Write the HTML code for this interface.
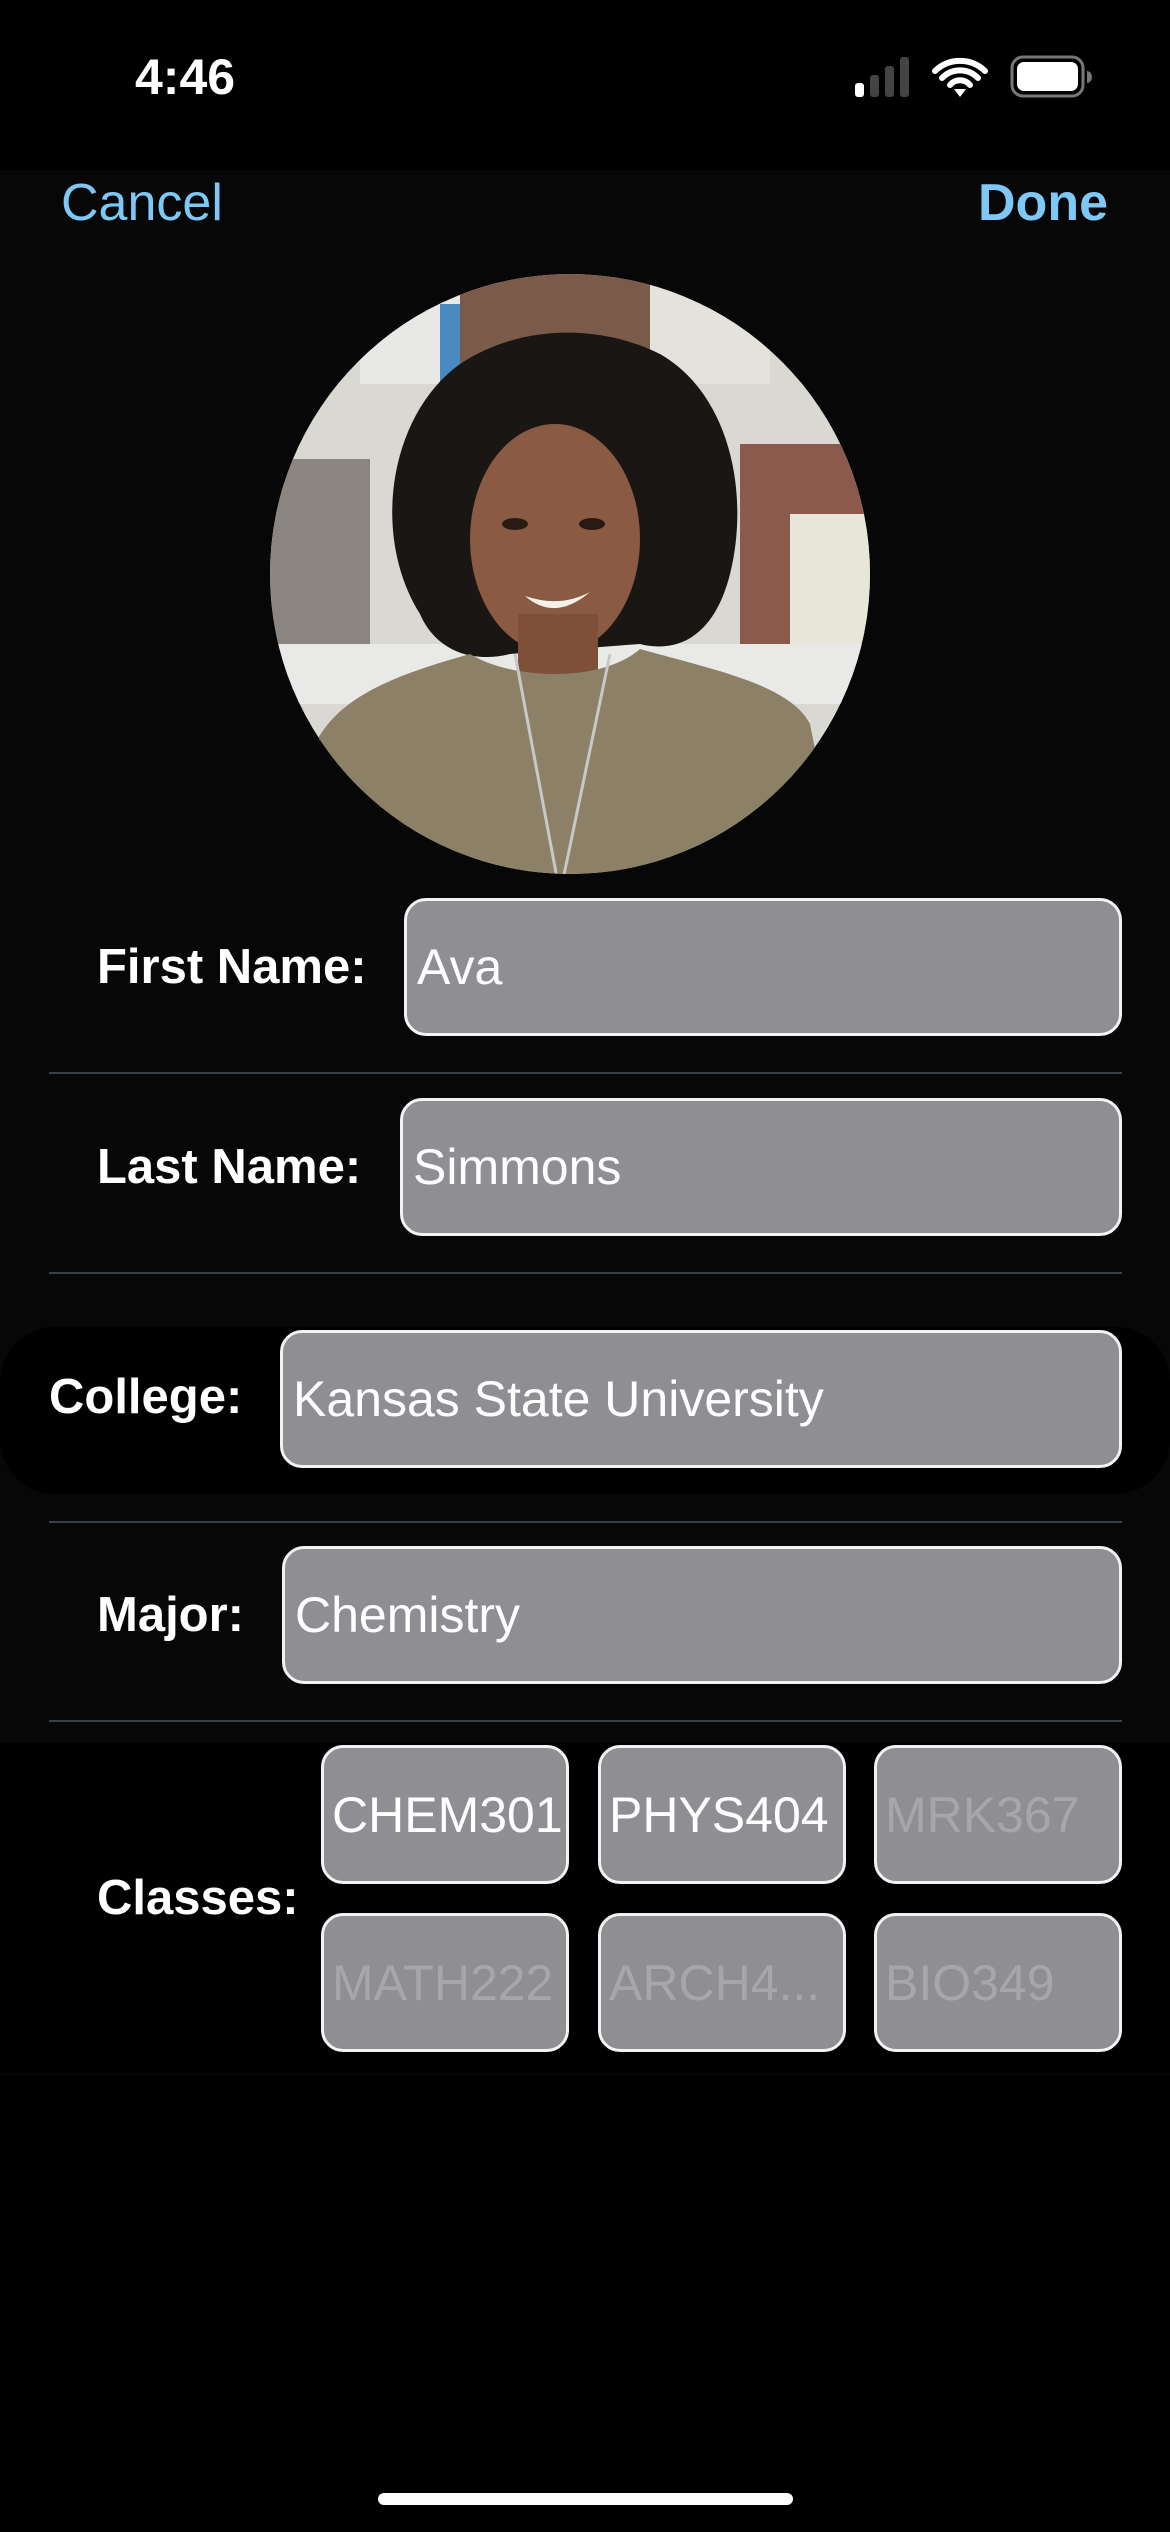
<!DOCTYPE html>
<html><head><meta charset="utf-8"><style>
html,body{margin:0;padding:0;background:#000;}
body{width:1170px;height:2532px;position:relative;overflow:hidden;font-family:"Liberation Sans",sans-serif;color:#fff;}
.abs{position:absolute;}
.content{position:absolute;left:0;top:170px;width:1170px;height:1905px;background:#070707;}
.lbl{position:absolute;font-weight:bold;font-size:49px;line-height:60px;color:#fff;}
.box{position:absolute;background:#8e8e93;border:3px solid #f2f2f2;border-radius:22px;box-sizing:border-box;font-size:50px;color:#fff;display:flex;align-items:center;padding-left:10px;white-space:nowrap;overflow:hidden;}
.line{position:absolute;left:49px;width:1073px;height:2px;background:#3a4048;}
.cls{position:absolute;width:248px;height:139px;background:#8e8e93;border:3px solid #f2f2f2;border-radius:22px;box-sizing:border-box;font-size:50px;display:flex;align-items:center;padding-left:8px;white-space:nowrap;overflow:hidden;}
.dim{color:#a6a6ab;}
</style></head><body>
<div class="abs" style="left:135px;top:48px;font-size:50px;font-weight:bold;">4:46</div>
<svg class="abs" style="left:855px;top:55px" width="240" height="45" viewBox="0 0 240 45">
<rect x="0" y="28" width="9" height="14" rx="3" fill="#fff"/>
<rect x="15" y="20" width="9" height="22" rx="3" fill="#444"/>
<rect x="30" y="11" width="9" height="31" rx="3" fill="#444"/>
<rect x="45" y="2" width="9" height="40" rx="3" fill="#444"/>
<path d="M80 16 a36 36 0 0 1 50 0 M87 23 a25 25 0 0 1 36 0 M95 30 a13 13 0 0 1 20 0" stroke="#fff" stroke-width="6" fill="none" stroke-linecap="round"/>
<path d="M99 34 L105 42 L111 34 Z" fill="#fff"/>
<rect x="157" y="2" width="71" height="39" rx="11" fill="none" stroke="#777" stroke-width="3"/>
<rect x="162" y="7" width="61" height="29" rx="7" fill="#fff"/>
<path d="M232 16 v12 a5 6 0 0 0 0 -12z" fill="#777"/>
</svg>
<div class="content"></div>
<div class="abs" style="left:61px;top:172px;font-size:52px;line-height:62px;color:#7ec8f5;">Cancel</div>
<div class="abs" style="right:62px;top:172px;font-size:52px;line-height:62px;color:#7ec8f5;font-weight:bold;">Done</div>

<svg class="abs" style="left:270px;top:274px" width="600" height="600" viewBox="0 0 600 600">
<defs><clipPath id="c"><circle cx="300" cy="300" r="300"/></clipPath></defs>
<g clip-path="url(#c)">
<rect width="600" height="600" fill="#d9d8d3"/>
<rect x="90" y="0" width="140" height="110" fill="#e8e8e6"/>
<rect x="170" y="30" width="20" height="80" fill="#4a8ac0"/>
<rect x="190" y="0" width="230" height="90" fill="#7a5a48"/>
<rect x="380" y="10" width="120" height="100" fill="#e4e2dc"/>
<rect x="0" y="185" width="100" height="185" fill="#8a8580"/>
<rect x="470" y="170" width="130" height="210" fill="#8b5a4c"/>
<rect x="520" y="240" width="80" height="140" fill="#e8e6d8"/>
<rect x="0" y="370" width="600" height="60" fill="#e9e9e7"/>
<path d="M150 340 C100 260 120 140 190 90 C250 50 330 50 390 80 C460 120 480 220 460 300 C445 360 410 380 370 370 L240 380 C200 390 165 375 150 340Z" fill="#1a1614"/>
<ellipse cx="285" cy="265" rx="85" ry="115" fill="#8a5a42"/>
<path d="M205 190 C235 140 300 125 340 155 C360 175 368 205 372 225 L372 160 C330 110 250 110 205 165Z" fill="#1a1614"/>
<rect x="248" y="340" width="80" height="80" fill="#7e5038"/>
<path d="M30 600 L45 470 C70 420 130 400 200 380 C240 405 330 410 370 375 C440 395 520 410 540 450 L570 600Z" fill="#8c8166"/>
<path d="M245 380 L290 620 L340 380" stroke="#c8c8c8" stroke-width="3" fill="none"/>
<path d="M255 322 Q285 348 320 318 Q290 334 255 322Z" fill="#f4f0ea"/>
<ellipse cx="245" cy="250" rx="13" ry="6" fill="#2a1a14"/>
<ellipse cx="322" cy="250" rx="13" ry="6" fill="#2a1a14"/>
</g></svg>

<div class="lbl" style="left:97px;top:937px;">First Name:</div>
<div class="box" style="left:404px;top:898px;width:718px;height:138px;">Ava</div>
<div class="line" style="top:1072px;"></div>
<div class="lbl" style="left:97px;top:1137px;">Last Name:</div>
<div class="box" style="left:400px;top:1098px;width:722px;height:138px;">Simmons</div>
<div class="line" style="top:1272px;"></div>
<div class="abs" style="left:0;top:1327px;width:1170px;height:167px;background:#000;border-radius:55px;"></div>
<div class="lbl" style="left:49px;top:1367px;">College:</div>
<div class="box" style="left:280px;top:1330px;width:842px;height:138px;">Kansas State University</div>
<div class="line" style="top:1521px;"></div>
<div class="lbl" style="left:97px;top:1585px;">Major:</div>
<div class="box" style="left:282px;top:1546px;width:840px;height:138px;">Chemistry</div>
<div class="line" style="top:1720px;"></div>
<div class="abs" style="left:0;top:1743px;width:1170px;height:330px;background:#000;"></div>
<div class="lbl" style="left:97px;top:1868px;">Classes:</div>
<div class="cls" style="left:321px;top:1745px;">CHEM301</div>
<div class="cls" style="left:598px;top:1745px;">PHYS404</div>
<div class="cls dim" style="left:874px;top:1745px;">MRK367</div>
<div class="cls dim" style="left:321px;top:1913px;">MATH222</div>
<div class="cls dim" style="left:598px;top:1913px;">ARCH4...</div>
<div class="cls dim" style="left:874px;top:1913px;">BIO349</div>
<div class="abs" style="left:378px;top:2493px;width:415px;height:12px;border-radius:6px;background:#fff;"></div>
</body></html>
